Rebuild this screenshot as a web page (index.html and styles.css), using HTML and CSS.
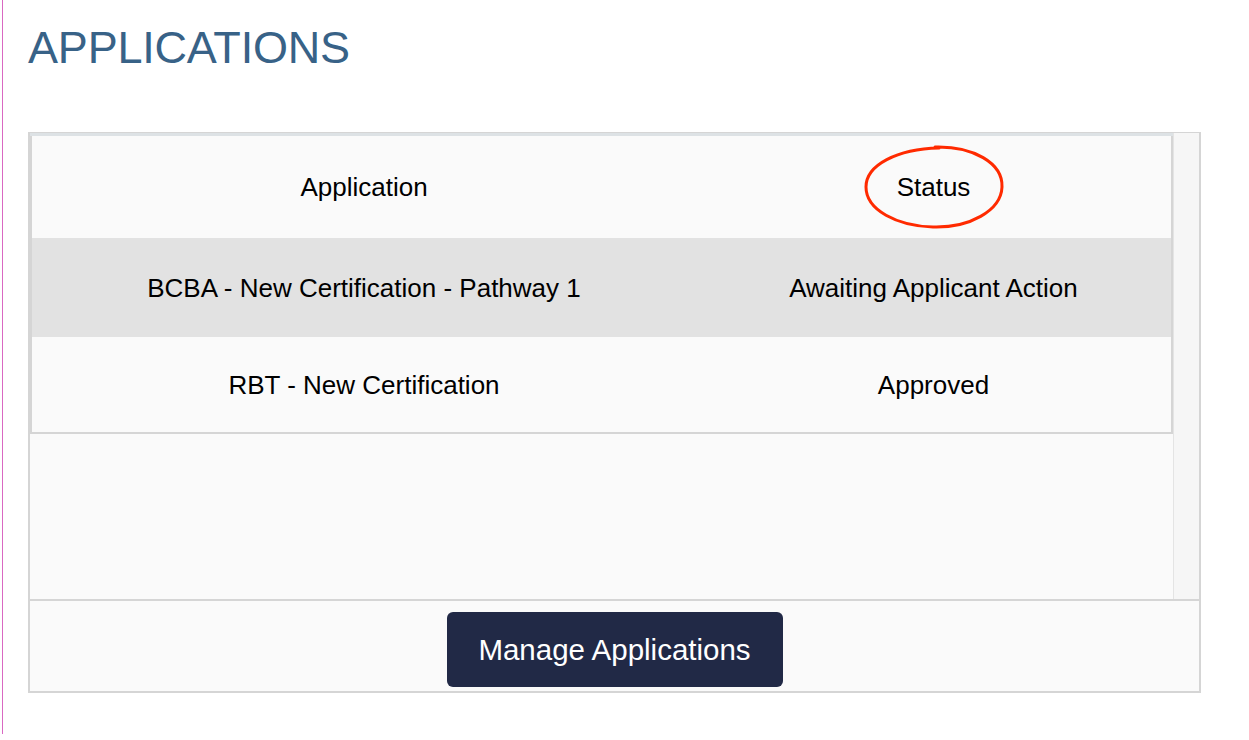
FILE: index.html
```html
<!DOCTYPE html>
<html lang="en">
<head>
    <meta charset="UTF-8">
    <meta name="viewport" content="width=device-width, initial-scale=1.0">
    <title>Applications</title>
    <link rel="stylesheet" href="styles.css">
</head>
<body>
    <div class="page">
        <h1>APPLICATIONS</h1>
        <div class="panel">
            <div class="scroll">
                <div class="table-wrap">
                    <table class="apps">
                        <thead>
                            <tr>
                                <th class="col-app">Application</th>
                                <th class="col-status">
                                    <span class="marked">
                                        Status
                                        <svg class="circle" width="146" height="88" viewBox="0 0 146 88">
                                            <path d="M74 4 C112 3 142 20 141 44 C140 68 108 85 72 84 C36 83 5 67 5 44 C5 22 36 6 78 5" />
                                        </svg>
                                    </span>
                                </th>
                            </tr>
                        </thead>
                        <tbody>
                            <tr class="row-a">
                                <td>BCBA - New Certification - Pathway 1</td>
                                <td>Awaiting Applicant Action</td>
                            </tr>
                            <tr class="row-b">
                                <td>RBT - New Certification</td>
                                <td>Approved</td>
                            </tr>
                        </tbody>
                    </table>
                </div>
                <div class="track"></div>
            </div>
            <div class="footer">
                <button class="manage">Manage Applications</button>
            </div>
        </div>
    </div>
</body>
</html>
```

FILE: styles.css
```css
body {
    margin: 0;
    background: #ffffff;
    font-family: 'Liberation Sans', Arial, sans-serif;
    color: #000;
    overflow: hidden;
}

.page {
    margin-left: 2px;
    border-left: 1px solid #d968c2;
    height: 734px;
    padding-left: 25px;
    padding-top: 25px;
    box-sizing: border-box;
}

h1 {
    margin: 0 0 62px 0;
    font-size: 45px;
    line-height: 45px;
    font-weight: normal;
    letter-spacing: -0.2px;
    color: #386287;
}

.panel {
    width: 1173px;
    box-sizing: border-box;
    border: 2px solid #d5d5d5;
    border-top-width: 1px;
    background: #fafafa;
}

.scroll {
    display: flex;
    height: 466px;
    border-bottom: 2px solid #d5d5d5;
}

.table-wrap {
    flex: 1;
}

.track {
    width: 26px;
    box-sizing: border-box;
    border-left: 1px solid #e4e4e4;
    background: #f6f6f6;
}

.apps {
    width: 100%;
    border-collapse: collapse;
    border-left: 2px solid #d5d5d5;
    border-right: 2px solid #d5d5d5;
    border-bottom: 2px solid #d5d5d5;
    border-top: 3px solid #dde2e5;
    font-size: 26px;
    table-layout: fixed;
}

.apps th,
.apps td {
    text-align: center;
    vertical-align: middle;
    padding: 0;
    font-weight: normal;
}

.apps th {
    padding-top: 1px;
}

.apps td {
    padding-top: 3px;
}

.col-app {
    width: 664px;
}

thead tr {
    height: 103px;
    background: #fafafa;
}

.row-a {
    height: 99px;
    background: #e2e2e2;
}

.row-b {
    height: 96px;
    background: #fafafa;
}

.marked {
    position: relative;
    display: inline-block;
}

.circle {
    position: absolute;
    left: 50%;
    top: 50%;
    margin-left: -73px;
    margin-top: -44px;
}

    .circle path {
        fill: none;
        stroke: #ff2a00;
        stroke-width: 3;
        stroke-linecap: round;
    }

.footer {
    display: flex;
    justify-content: center;
    padding: 11px 0 4px 0;
}

.manage {
    width: 336px;
    height: 75px;
    border: none;
    border-radius: 6px;
    background: #212946;
    color: #ffffff;
    font-family: 'Liberation Sans', Arial, sans-serif;
    font-size: 29.5px;
    cursor: pointer;
}
```
